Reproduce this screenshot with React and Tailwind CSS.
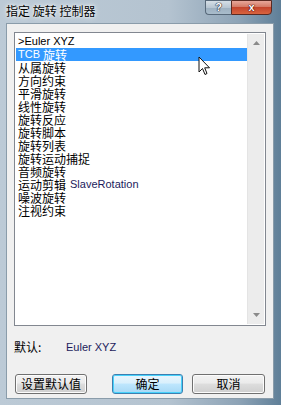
import React from "react";

const cjk = { fontFamily: '"Noto Sans CJK SC", "Liberation Sans", sans-serif' };
const lat = { fontFamily: '"Liberation Sans", "Noto Sans CJK SC", sans-serif' };

const items = [
  { pre: ">Euler XYZ", t: "" },
  { pre: "TCB ", t: "旋转", sel: true },
  { t: "从属旋转" },
  { t: "方向约束" },
  { t: "平滑旋转" },
  { t: "线性旋转" },
  { t: "旋转反应" },
  { t: "旋转脚本" },
  { t: "旋转列表" },
  { t: "旋转运动捕捉" },
  { t: "音频旋转" },
  { t: "运动剪辑", extra: "SlaveRotation" },
  { t: "噪波旋转" },
  { t: "注视约束" },
];

function Btn({ children, focused, w = "w-[72px]" }) {
  return (
    <div
      className={`${w} h-[20px] rounded-[3px] border flex items-center justify-center text-[12px] text-black ${
        focused
          ? "border-[#3c7fb1] shadow-[inset_0_0_0_1px_#48d2fb] bg-[linear-gradient(#eaf6fd_0%,#d9f0fc_45%,#bee6fd_50%,#a7d9f5_100%)]"
          : "border-[#707070] shadow-[inset_0_0_0_1px_#fcfcfc] bg-[linear-gradient(#f2f2f2_0%,#ebebeb_45%,#dddddd_50%,#cfcfcf_100%)]"
      }`}
      style={cjk}
    >
      {children}
    </div>
  );
}

export default function App() {
  return (
    <div className="w-[281px] h-[405px] overflow-hidden bg-[linear-gradient(90deg,#bccad6_0%,#b4c3d0_60%,#8da3b6_85%,#5f7f98_100%)] flex flex-col">
      {/* title bar */}
      <div className="h-[23px] flex items-start shrink-0">
        <div className="pl-[6px] pt-[4px] text-[12px] leading-[14px] text-black [text-shadow:0_0_6px_#ffffff,0_0_3px_#ffffff]" style={cjk}>
          指定 旋转 控制器
        </div>
        <div className="ml-auto mr-[9px] flex h-[15px]">
          <div className="w-[26px] h-[15px] rounded-bl-[4px] border border-[#58697a] border-r-0 bg-[linear-gradient(#d6dfe6_0%,#b8c6d2_50%,#9db0c0_51%,#a9bccb_100%)] flex items-center justify-center">
            <span className="text-[11px] font-bold leading-none text-white [text-shadow:0_0_1px_#223,0_0_1px_#223,0_0_1px_#223]" style={lat}>?</span>
          </div>
          <div className="w-[41px] h-[15px] rounded-br-[4px] border border-[#5a2a22] bg-[linear-gradient(#e7a79a_0%,#d47a66_45%,#c4452d_50%,#d9643f_100%)] flex items-center justify-center">
            <span className="text-[11px] font-bold leading-none text-white [text-shadow:0_0_1px_#400,0_0_1px_#400,0_0_1px_#400]" style={lat}>x</span>
          </div>
        </div>
      </div>

      {/* client area */}
      <div className="ml-[6px] w-[268px] h-[376px] bg-[#f0f0f0] border border-[#8a9caa] flex flex-col pl-[7px] pt-[8px]">
        {/* listbox */}
        <div className="w-[252px] h-[294px] border border-[#828790] bg-white flex">
          <div className="flex-1 pt-[2px] pl-[1px]">
            {items.map((it, i) => (
              <div
                key={i}
                className={`h-[13px] flex items-center pl-[2px] text-[12px] leading-[13px] whitespace-nowrap ${
                  it.sel ? "bg-[#3399ff] text-white" : "text-black"
                }`}
                style={cjk}
              >
                {it.pre && (
                  <span className="text-[11px] whitespace-pre" style={lat}>{it.pre}</span>
                )}
                {it.t && <span>{it.t}</span>}
                {it.extra && (
                  <span className="ml-[4px] text-[11px] text-[#1c1c5c]" style={lat}>
                    {it.extra}
                  </span>
                )}
              </div>
            ))}
          </div>
          <div className="w-[17px] my-[1px] mr-[1px] bg-[#ececec] border-l border-[#e4e4e4] flex flex-col items-center justify-between py-[7px]">
            <svg width="7" height="4" viewBox="0 0 7 4"><path d="M0 4 L3.5 0 L7 4 Z" fill="#8a8a8a" /></svg>
            <svg width="7" height="4" viewBox="0 0 7 4"><path d="M0 0 L3.5 4 L7 0 Z" fill="#8a8a8a" /></svg>
          </div>
        </div>

        {/* default row */}
        <div className="h-[22px] mt-[10px] flex items-center text-[12px]">
          <span className="w-[52px] text-black" style={cjk}>默认:</span>
          <span className="text-[11px] text-[#1c1c5c]" style={lat}>Euler XYZ</span>
        </div>

        {/* buttons */}
        <div className="mt-[16px] flex items-center pl-[1px]">
          <Btn>设置默认值</Btn>
          <div className="ml-[25px]"><Btn focused w="w-[71px]">确定</Btn></div>
          <div className="ml-[9px]"><Btn w="w-[73px]">取消</Btn></div>
        </div>
      </div>

      {/* cursor */}
      <svg className="absolute left-[198px] top-[56px]" width="14" height="21" viewBox="0 0 14 21">
        <path d="M1 1 L1 16 L4.5 12.5 L7 18.5 L9 17.5 L6.7 11.8 L11.5 11.8 Z" fill="white" stroke="#111" strokeWidth="1" strokeLinejoin="round" />
      </svg>
    </div>
  );
}
